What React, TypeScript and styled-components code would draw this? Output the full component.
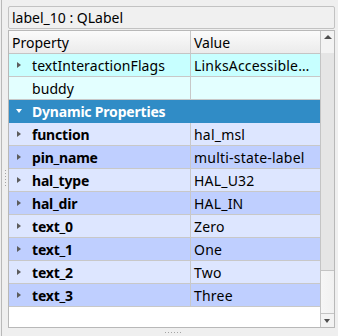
import React from "react";
import styled, { createGlobalStyle } from "styled-components";

const Global = createGlobalStyle`
  html, body { margin: 0; padding: 0; background: #efefef; }
  body { font-family: "Noto Sans", "Open Sans", sans-serif; font-size: 14px; color: #000; }
`;

const Window = styled.div`
  width: 338px;
  height: 336px;
  display: flex;
  background: #efefef;
  overflow: hidden;
`;

const LeftStrip = styled.div`
  width: 8px;
  flex: none;
  display: flex;
  align-items: center;
  justify-content: center;
  position: relative;
  box-sizing: border-box;
  &::before {
    content: "";
    position: absolute;
    left: 1px;
    top: 0;
    bottom: 0;
    width: 1px;
    background: #b9b9b9;
  }
`;

const VDots = styled.div`
  width: 1px;
  height: 16px;
  margin-left: 2px;
  margin-top: 20px;
  background: repeating-linear-gradient(to bottom, #a4a4a4 0 1px, transparent 1px 3px);
`;

const Main = styled.div`
  width: 327px;
  flex: none;
  padding-top: 6px;
  display: flex;
  flex-direction: column;
`;

const FilterBox = styled.div`
  height: 23px;
  box-sizing: border-box;
  border: 1px solid #c2c2c2;
  border-radius: 2px;
  background: #f0f0f0;
  padding-left: 3px;
  display: flex;
  align-items: center;
  margin-bottom: 1px;
`;

const Table = styled.div`
  height: 298px;
  box-sizing: border-box;
  border: 1px solid #b8b8b8;
  display: flex;
  background: #fff;
`;

const ListArea = styled.div`
  flex: 1;
  display: flex;
  flex-direction: column;
  min-width: 0;
`;

const HeaderRow = styled.div`
  height: 23px;
  box-sizing: border-box;
  display: flex;
  border-bottom: 1px solid #c4c4c4;
  background: linear-gradient(#fbfbfb, #ebebeb);
`;

const HeaderCell = styled.div<{ $w?: number }>`
  ${(p) => (p.$w ? `width: ${p.$w}px; flex: none; border-right: 1px solid #c8c8c8;` : `flex: 1;`)}
  box-sizing: border-box;
  padding-left: 3px;
  display: flex;
  align-items: center;
`;

const Row = styled.div<{ $bg: string }>`
  height: 23px;
  box-sizing: border-box;
  display: flex;
  border-bottom: 1px solid #c8c8c8;
  background: ${(p) => p.$bg};
`;

const NameCell = styled.div<{ $bold?: boolean }>`
  width: 182px;
  flex: none;
  box-sizing: border-box;
  border-right: 1px solid #c8c8c8;
  display: flex;
  align-items: center;
  font-weight: ${(p) => (p.$bold ? 700 : 400)};
  letter-spacing: ${(p) => (p.$bold ? "-0.2px" : "0.08px")};
  white-space: nowrap;
`;

const ArrowSlot = styled.div`
  width: 23px;
  flex: none;
  padding-left: 8px;
  box-sizing: border-box;
  display: flex;
  align-items: center;
`;

const RightArrow = styled.div`
  width: 0;
  height: 0;
  border-left: 4px solid #5c5c5c;
  border-top: 3.5px solid transparent;
  border-bottom: 3.5px solid transparent;
`;

const DownArrow = styled.div<{ $color: string }>`
  width: 0;
  height: 0;
  margin-left: -1px;
  border-top: 4px solid ${(p) => p.$color};
  border-left: 3.5px solid transparent;
  border-right: 3.5px solid transparent;
`;

const UpArrow = styled.div`
  width: 0;
  height: 0;
  border-bottom: 4px solid #4e4e4e;
  border-left: 4px solid transparent;
  border-right: 4px solid transparent;
`;

const ValueCell = styled.div`
  flex: 1;
  min-width: 0;
  padding-left: 3px;
  display: flex;
  align-items: center;
  white-space: nowrap;
  overflow: hidden;
  letter-spacing: 0.2px;
`;

const GroupRow = styled.div`
  height: 23px;
  box-sizing: border-box;
  display: flex;
  align-items: center;
  background: #308cc6;
  color: #fff;
  font-weight: 700;
  letter-spacing: -0.2px;
  border-bottom: 1px solid #308cc6;
`;

const Empty = styled.div`
  flex: 1;
  background: #fff;
`;

const ScrollBar = styled.div`
  width: 14px;
  flex: none;
  box-sizing: border-box;
  border-left: 1px solid #c4c4c4;
  display: flex;
  flex-direction: column;
  background: #e5e5e5;
`;

const ScrollButton = styled.div<{ $h: number; $top?: boolean }>`
  height: ${(p) => p.$h}px;
  flex: none;
  display: flex;
  justify-content: center;
  align-items: ${(p) => (p.$top ? "flex-start" : "center")};
  padding-top: ${(p) => (p.$top ? 4 : 0)}px;
  box-sizing: border-box;
  background: #f3f3f3;
  ${(p) => (p.$top ? "" : "border-top: 1px solid #c4c4c4;")}
`;

const Groove = styled.div`
  flex: 1;
  display: flex;
  flex-direction: column;
  justify-content: flex-end;
`;

const Handle = styled.div`
  height: 43px;
  box-sizing: border-box;
  border-top: 1px solid #c4c4c4;
  background: linear-gradient(to right, #f6f6f6, #f1f1f1);
`;

const BottomBar = styled.div`
  flex: 1;
  display: flex;
  justify-content: center;
  align-items: center;
`;

const HDots = styled.div`
  width: 17px;
  height: 1px;
  margin-left: 3px;
  background: repeating-linear-gradient(to right, #a4a4a4 0 1px, transparent 1px 3px);
`;

type Prop = { name: string; value: string; bg: string; arrow?: boolean };

const topRows: Prop[] = [
  { name: "textInteractionFlags", value: "LinksAccessible…", bg: "#c7ffff", arrow: true },
  { name: "buddy", value: "", bg: "#e3ffff" },
];

const dynRows: Prop[] = [
  { name: "function", value: "hal_msl", bg: "#dde6ff" },
  { name: "pin_name", value: "multi-state-label", bg: "#bfcfff" },
  { name: "hal_type", value: "HAL_U32", bg: "#dde6ff" },
  { name: "hal_dir", value: "HAL_IN", bg: "#bfcfff" },
  { name: "text_0", value: "Zero", bg: "#dde6ff" },
  { name: "text_1", value: "One", bg: "#bfcfff" },
  { name: "text_2", value: "Two", bg: "#dde6ff" },
  { name: "text_3", value: "Three", bg: "#bfcfff" },
];

function PropRow({ p, bold }: { p: Prop; bold?: boolean }) {
  return (
    <Row $bg={p.bg}>
      <NameCell $bold={bold}>
        <ArrowSlot>{(p.arrow || bold) && <RightArrow />}</ArrowSlot>
        {p.name}
      </NameCell>
      <ValueCell>{p.value}</ValueCell>
    </Row>
  );
}

export default function App() {
  return (
    <>
      <Global />
      <Window>
        <LeftStrip>
          <VDots />
        </LeftStrip>
        <Main>
          <FilterBox>label_10 : QLabel</FilterBox>
          <Table>
            <ListArea>
              <HeaderRow>
                <HeaderCell $w={182}>Property</HeaderCell>
                <HeaderCell>Value</HeaderCell>
              </HeaderRow>
              {topRows.map((p) => (
                <PropRow key={p.name} p={p} />
              ))}
              <GroupRow>
                <ArrowSlot>
                  <DownArrow $color="#ffffff" />
                </ArrowSlot>
                Dynamic Properties
              </GroupRow>
              {dynRows.map((p) => (
                <PropRow key={p.name} p={p} bold />
              ))}
              <Empty />
            </ListArea>
            <ScrollBar>
              <ScrollButton $h={22} $top>
                <UpArrow />
              </ScrollButton>
              <Groove>
                <Handle />
              </Groove>
              <ScrollButton $h={14}>
                <DownArrow $color="#4e4e4e" />
              </ScrollButton>
            </ScrollBar>
          </Table>
          <BottomBar>
            <HDots />
          </BottomBar>
        </Main>
      </Window>
    </>
  );
}
